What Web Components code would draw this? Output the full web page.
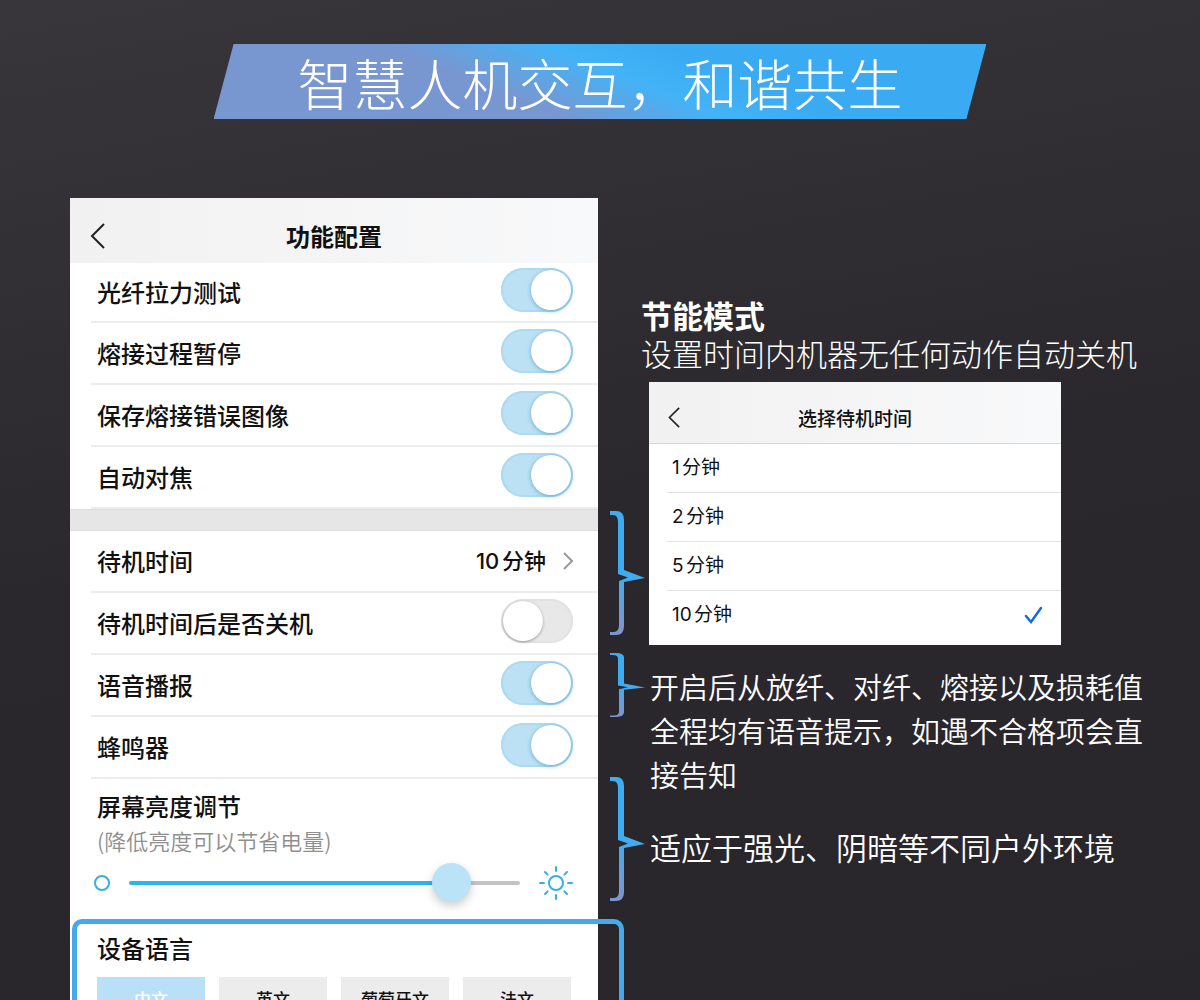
<!DOCTYPE html>
<html lang="zh-CN">
<head>
<meta charset="utf-8">
<meta name="viewport" content="width=device-width, initial-scale=1">
<title>智慧人机交互，和谐共生</title>
<style>
  body { margin: 0; background: #28262b; font-family: "Noto Sans CJK SC", sans-serif; }
</style>
</head>
<body>
<feature-page></feature-page>
<script>
const define = (name, html, setup) => customElements.define(name, class extends HTMLElement {
  constructor() {
    super();
    this.attachShadow({ mode: "open" }).innerHTML = html;
  }
  connectedCallback() {
    if (setup) setup(this, this.shadowRoot);
  }
});

/* Slanted title ribbon */
define("title-banner", `
<style>
  :host { display: block; }
  h1 {
    margin: 0; height: 75px; line-height: 74px; text-align: center; white-space: nowrap;
    font-size: 55px; font-weight: 300; color: #fff;
    clip-path: polygon(20px 0, 100% 0, calc(100% - 20px) 100%, 0 100%);
    background: linear-gradient(22deg, #7897d1 37%, #43b3f7 54%, #3aabf3 66%);
  }
</style>
<h1><slot></slot></h1>`);

/* Header bar of an app screen */
define("nav-bar", `
<style>
  :host { display: block; background: linear-gradient(90deg, #f1f1f2, #f5f5f6 50%, #f8f9fa); }
  header { display: grid; grid-template-columns: 28px 1fr 28px; align-items: center;
    height: var(--bar-height, 65px); padding: 10px 14px 0; box-sizing: border-box; }
  button { display: flex; border: 0; padding: 0; background: none; }
  svg { width: var(--chevron, 26px); height: var(--chevron, 26px); }
  h2 { margin: 0; text-align: center; font-size: var(--bar-size, 24px); font-weight: var(--bar-weight, 700);
    line-height: 36px; color: #111; }
</style>
<header>
  <button type="button" aria-label="返回"><svg viewBox="0 0 26 26" fill="none" stroke="#222" stroke-width="2"><path d="M20 1 8 13l12 12"/></svg></button>
  <h2><slot></slot></h2>
</header>`);

/* Switch row */
define("switch-row", `
<style>
  :host { display: block; margin-left: 21px; }
  label { display: flex; justify-content: space-between; align-items: center; box-sizing: border-box;
    height: var(--row-height, 62px); padding: 0 25px 0 6px; border-bottom: 2px solid #ececec;
    font-size: 24px; font-weight: 500; line-height: 36px; color: #111; }
  input { appearance: none; box-sizing: border-box; width: 72px; height: 44px; margin: 0 0 4px; padding: 2px;
    display: flex; border-radius: 22px; background: #e8e8e8; box-shadow: inset 0 0 0 2px #e2e2e2; }
  input::before { content: ""; width: 40px; height: 40px; border-radius: 50%; background: #fff;
    box-shadow: 0 1px 3px #0005; }
  input:checked { justify-content: flex-end; background: #bce1f5; box-shadow: inset 0 0 0 2px #aedaf1; }
  input:checked::before { box-shadow: 0 1px 4px #2f86b299; }
</style>
<label><slot></slot><input type="checkbox" role="switch"></label>`,
(host, root) => { root.querySelector("input").checked = host.hasAttribute("checked"); });

/* Row that opens another screen */
define("link-row", `
<style>
  :host { display: block; margin-left: 21px; }
  button { display: flex; width: 100%; align-items: center; box-sizing: border-box; height: 62px;
    padding: 0 24px 0 6px; border: 0; border-bottom: 2px solid #ececec; background: none; text-align: left;
    font: 500 24px/36px "Noto Sans CJK SC", sans-serif; color: #111; }
  .label { flex: 1; }
  .value { font: 500 22px/36px Inter, "Noto Sans CJK SC", sans-serif; text-autospace: normal; }
  svg { width: 12px; height: 20px; margin-left: 16px; }
</style>
<button type="button"><span class="label"><slot></slot></span><span class="value"><slot name="value"></slot></span>
<svg viewBox="0 0 12 20" fill="none" stroke="#999" stroke-width="2"><path d="m2 2 8 8-8 8"/></svg></button>`);

/* Screen brightness control */
define("brightness-control", `
<style>
  :host { display: block; padding: 9px 25px 9px 24px; }
  label { display: block; padding-left: 3px; font-size: 24px; font-weight: 500; line-height: 36px; color: #111; }
  small { display: block; font-size: 22px; font-weight: 350; line-height: 32px; color: #8f8f8f; }
  div { display: flex; align-items: center; gap: 19px; height: 54px; }
  .dot { width: 16px; height: 16px; flex: none; }
  .sun { width: 34px; height: 34px; flex: none; }
  input { appearance: none; flex: 1; min-width: 0; height: 39px; margin: 0; background: none; }
  input::-webkit-slider-runnable-track { height: 4px; border-radius: 2px;
    background: linear-gradient(90deg, #2fb4e9 82%, #c4c4c4 82%); }
  input::-webkit-slider-thumb { appearance: none; width: 39px; height: 39px; margin-top: -18px; border: 0;
    border-radius: 50%; background: #bae3f7; box-shadow: 0 4px 10px #0003; }
</style>
<label for="level"><slot></slot><small><slot name="hint"></slot></small></label>
<div>
  <svg class="dot" viewBox="0 0 16 16" fill="none" stroke="#35b0e6" stroke-width="2"><circle cx="8" cy="8" r="7"/></svg>
  <input id="level" type="range" min="0" max="100" value="86">
  <svg class="sun" viewBox="0 0 34 34" fill="none" stroke="#35b0e6" stroke-width="2" stroke-linecap="round">
    <circle cx="17" cy="17" r="7"/>
    <path d="M17 1v4M17 29v4M1 17h4M29 17h4M6 6l2.600 2.600M25.400 25.400 28 28M6 28l2.600-2.600M25.400 8.600 28 6"/>
  </svg>
</div>`);

/* Device language picker */
define("language-picker", `
<style>
  :host { display: block; position: relative; margin: 0 -26px 0 2px; padding: 6px 48px 24px 20px;
    border: 5px solid #45a9ec; border-radius: 10px; }
  h3 { margin: 0; font-size: 24px; font-weight: 500; line-height: 36px; color: #111; }
  div { display: grid; grid-template-columns: repeat(4, 1fr); gap: 14px; margin-top: 11px; }
  ::slotted(button) { height: 44px; border: 0; padding: 0; background: #ececec; color: #111;
    font: 500 17px/24px "Noto Sans CJK SC", sans-serif; }
  ::slotted(button[aria-pressed="true"]) { background: #b9e0f6; color: #fff; }
</style>
<h3><slot name="title"></slot></h3>
<div><slot></slot></div>`);

/* Curly brace that points at a note */
define("curly-brace", `
<style>
  :host { display: block; width: 35px; }
  svg { display: block; width: 100%; height: 100%; }
</style>
<svg viewBox="0 0 35 124" preserveAspectRatio="none" aria-hidden="true">
  <linearGradient id="g" x2="0" y2="1"><stop offset=".5" stop-color="#3facef"/><stop offset=".95" stop-color="#7d96cf"/></linearGradient>
  <path fill="url(#g)" d="M0 0H6Q14 0 14 9V59L35 67 14 71V115Q14 124 6 124H0V121H4Q9 121 9 114V70L18 66.500 8 63V11Q8 4 3 4H0Z"/>
</svg>`);

/* One selectable standby time */
define("time-option", `
<style>
  :host { display: block; margin-left: 18px; }
  :host(:not(:last-of-type)) { border-bottom: 1px solid #e2e2e2; }
  label { display: flex; align-items: center; justify-content: space-between; height: 48px; padding: 0 18px 0 5px;
    font: 400 19px/28px Inter, "Noto Sans CJK SC", sans-serif; text-autospace: normal; color: #111; }
  input { appearance: none; margin: 0; }
  svg { display: none; width: 20px; height: 20px; }
  input:checked + svg { display: block; }
  .text { flex: 1; }
</style>
<label><span class="text"><slot></slot></span><input type="radio" name="standby">
<svg viewBox="0 0 20 20" fill="none" stroke="#0f6be6" stroke-width="2.500" stroke-linecap="round"><path d="m3 11 5 6L18 3"/></svg></label>`,
(host, root) => { root.querySelector("input").checked = host.hasAttribute("checked"); });

define("standby-dialog", `
<style>
  :host { display: block; max-width: 412px; padding-bottom: 6px; background: #fff;
    --bar-height: 61px; --bar-size: 19px; --bar-weight: 500; --chevron: 21px; }
  nav-bar { border-bottom: 1px solid #d8d8d8; }
</style>
<nav-bar>选择待机时间</nav-bar>
<time-option>1分钟</time-option>
<time-option>2分钟</time-option>
<time-option>5分钟</time-option>
<time-option checked>10分钟</time-option>`);

define("settings-screen", `
<style>
  :host { display: block; background: #fff; }
  .first { --row-height: 60px; }
  .break { height: 20px; border-top: 1px solid #dcdcdc; border-bottom: 1px solid #dcdcdc; background: #e6e6e6; }
</style>
<nav-bar>功能配置</nav-bar>
<switch-row class="first" checked>光纤拉力测试</switch-row>
<switch-row checked>熔接过程暂停</switch-row>
<switch-row checked>保存熔接错误图像</switch-row>
<switch-row checked>自动对焦</switch-row>
<div class="break"></div>
<link-row>待机时间<span slot="value">10分钟</span></link-row>
<switch-row>待机时间后是否关机</switch-row>
<switch-row checked>语音播报</switch-row>
<switch-row checked>蜂鸣器</switch-row>
<brightness-control>屏幕亮度调节<span slot="hint">(降低亮度可以节省电量)</span></brightness-control>
<language-picker>
  <span slot="title">设备语言</span>
  <button type="button" aria-pressed="true">中文</button>
  <button type="button" aria-pressed="false">英文</button>
  <button type="button" aria-pressed="false">葡萄牙文</button>
  <button type="button" aria-pressed="false">法文</button>
</language-picker>`);

define("feature-page", `
<style>
  :host { display: block; box-sizing: border-box; height: 100vh; overflow: hidden; padding-top: 44px;
    background: linear-gradient(170deg, #39363b, #2a282d 50%, #28262b); }
  title-banner { width: 64.400%; margin: 0 auto; }
  main { display: grid; grid-template-columns: minmax(0, 528fr) 51px minmax(0, 499fr); margin-top: 79px; padding: 0 52px 0 70px; }
  .braces { display: flex; flex-direction: column; padding: 313px 0 0 12px; }
  .tall { height: 124px; }
  .short { height: 64px; margin: 18px 0 60px; }
  .notes { padding-top: 98px; color: #fff; }
  h2, p { margin: 0; font-weight: 350; }
  .mode { margin-left: -8px; white-space: nowrap; font-size: 31px; line-height: 38px; }
  .mode h2 { font-size: 31px; font-weight: 700; }
  .mode p { font-weight: 300; }
  standby-dialog { margin-top: 10px; }
  .voice { margin: 19px 0 0 1px; font-size: 29px; line-height: 44px; }
  .light { margin: 29px 0 0 1px; font-size: 31px; line-height: 44px; white-space: nowrap; }
</style>
<title-banner>智慧人机交互，和谐共生</title-banner>
<main>
  <settings-screen></settings-screen>
  <div class="braces">
    <curly-brace class="tall"></curly-brace>
    <curly-brace class="short"></curly-brace>
    <curly-brace class="tall"></curly-brace>
  </div>
  <div class="notes">
    <div class="mode">
      <h2>节能模式</h2>
      <p>设置时间内机器无任何动作自动关机</p>
    </div>
    <standby-dialog></standby-dialog>
    <p class="voice">开启后从放纤、对纤、熔接以及损耗值全程均有语音提示，如遇不合格项会直接告知</p>
    <p class="light">适应于强光、阴暗等不同户外环境</p>
  </div>
</main>`);
</script>
</body>
</html>
